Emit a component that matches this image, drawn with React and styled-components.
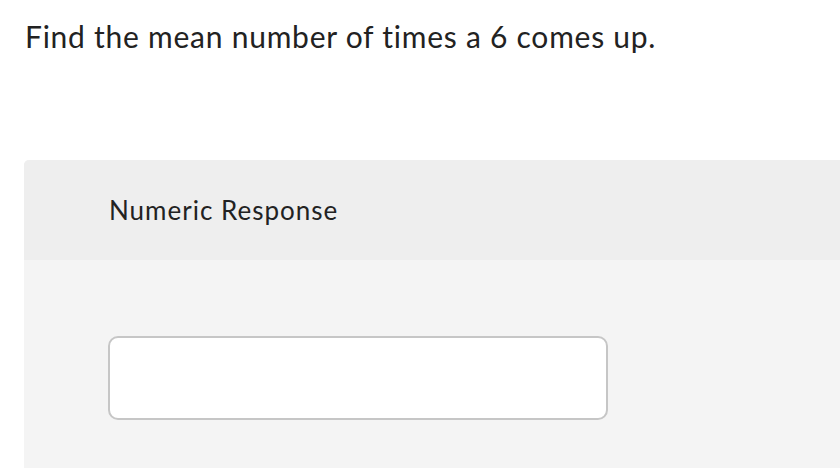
import React from "react";
import styled, { createGlobalStyle } from "styled-components";

const GlobalStyle = createGlobalStyle`
  html, body {
    margin: 0;
    padding: 0;
    background: #ffffff;
    overflow: hidden;
  }
  body {
    font-family: "Lato", "Liberation Sans", Arial, sans-serif;
    color: #222222;
  }
`;

const Page = styled.div`
  width: 840px;
  height: 468px;
  overflow: hidden;
`;

const Question = styled.h1`
  margin: 0;
  padding: 18px 0 0 25px;
  font-size: 30px;
  font-weight: 400;
  line-height: 36px;
  letter-spacing: 0.75px;
  color: #222222;
`;

const Card = styled.section`
  margin: 106px 0 0 24px;
  width: 900px;
  border-radius: 5px 0 0 0;
  overflow: hidden;
  background: #f4f4f4;
`;

const CardHeader = styled.header`
  height: 100px;
  display: flex;
  align-items: center;
  padding-left: 85px;
  background: #eeeeee;
  font-size: 26px;
  letter-spacing: 1px;
  color: #222222;
`;

const CardBody = styled.div`
  padding: 76px 0 60px 84px;
`;

const AnswerInput = styled.input`
  display: block;
  box-sizing: border-box;
  width: 500px;
  height: 84px;
  border: 2px solid #c6c6c6;
  border-radius: 10px;
  background: #ffffff;
  outline: none;
  font: inherit;
  font-size: 24px;
  padding: 0 16px;
`;

export default function App() {
  return (
    <Page>
      <GlobalStyle />
      <Question>Find the mean number of times a 6 comes up.</Question>
      <Card>
        <CardHeader>Numeric Response</CardHeader>
        <CardBody>
          <AnswerInput type="text" aria-label="Numeric Response" />
        </CardBody>
      </Card>
    </Page>
  );
}
